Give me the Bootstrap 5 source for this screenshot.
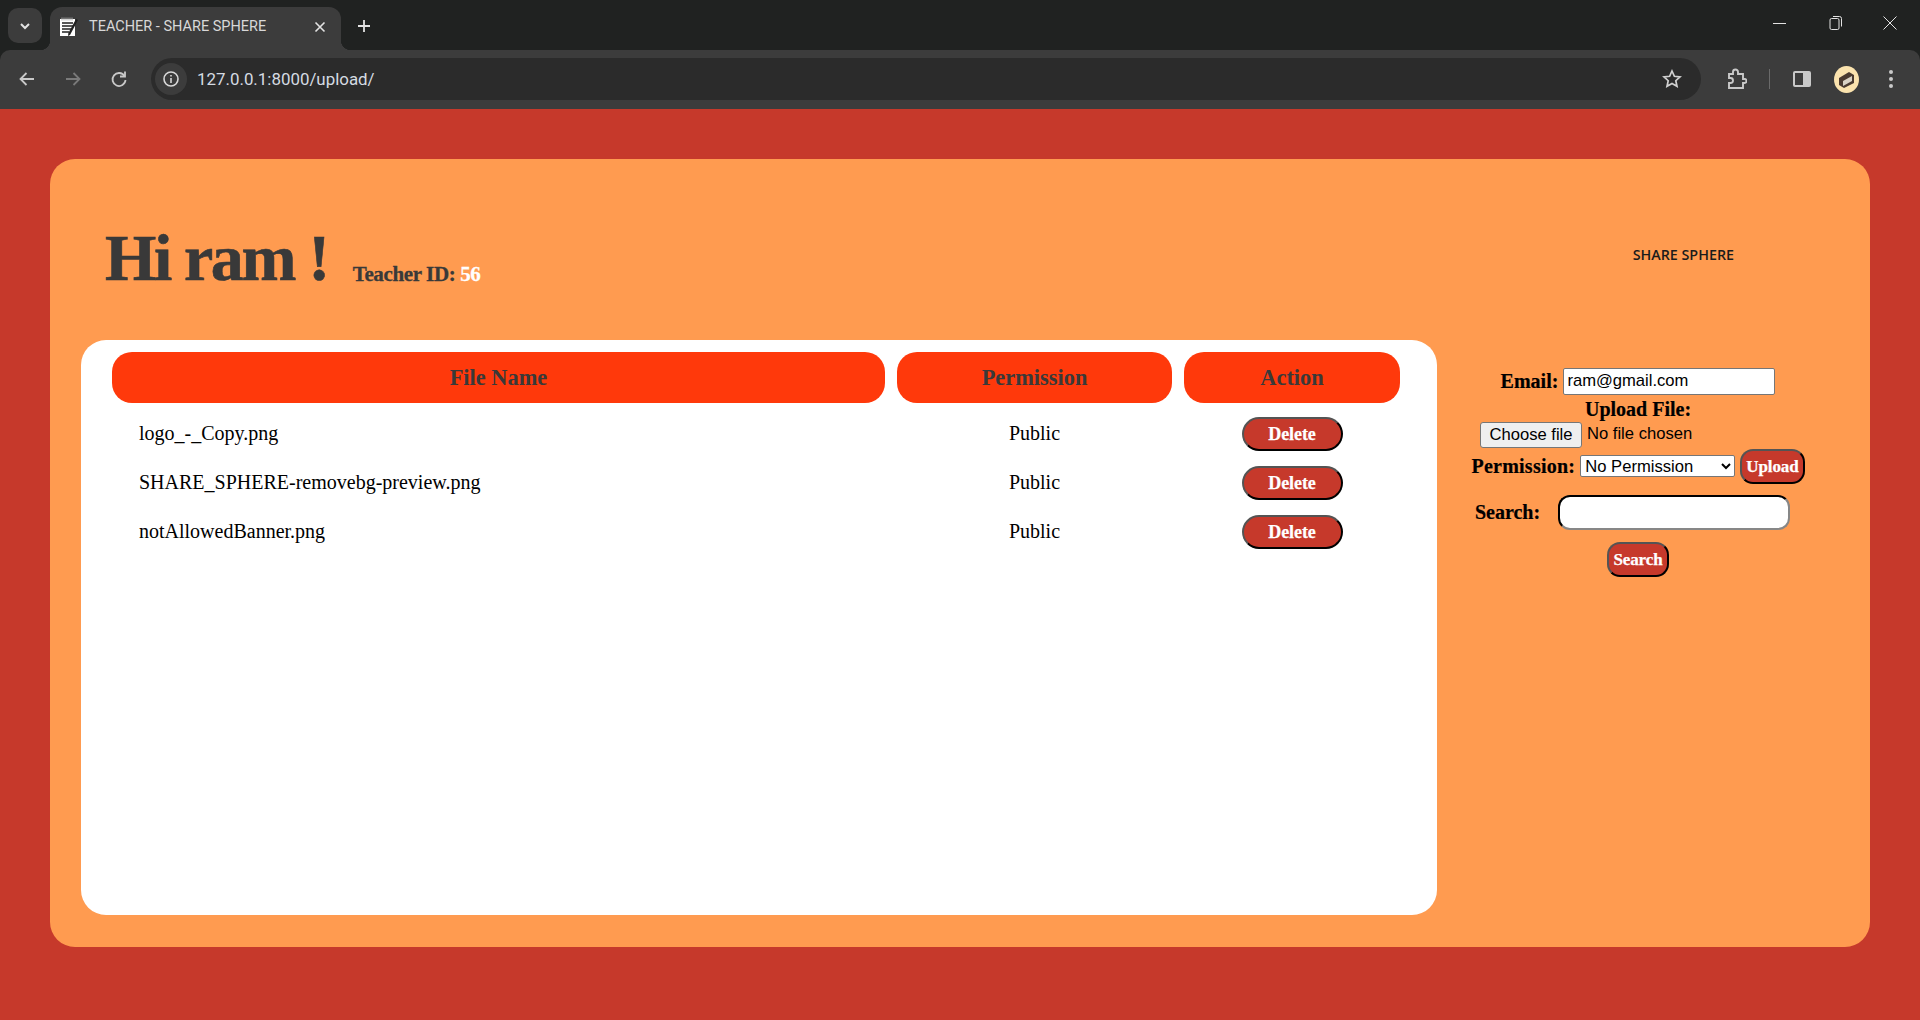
<!DOCTYPE html>
<html lang="en">
<head>
    <meta charset="UTF-8">
    <meta name="viewport" content="width=device-width, initial-scale=1.0">
    <title>TEACHER - SHARE SPHERE</title>
    <link href="https://cdn.jsdelivr.net/npm/bootstrap@5.3.3/dist/css/bootstrap.min.css" rel="stylesheet">
    <style>
        html, body { height: 100%; }
        body { background-color: #C6392B; overflow: hidden; font-family: "Liberation Serif", serif; }

        /* browser bar */
        .browser-top { background: #202221; }
        .tab-strip { height: 50px; padding: 7px 0 0 8px; }
        .tab-list-btn { width: 34px; height: 35px; margin-top: 1px; background: #3c3c3c; border-radius: 10px; }
        .tab-item { position: relative; width: 291px; height: 43px; margin-left: 8px; padding: 0 15px 4px 9px; background: #3c3c3c; border-radius: 12px 12px 0 0; color: #d8d8d8; font: 400 14.5px Roboto, sans-serif; }
        .tab-item::before, .tab-item::after { content: ""; position: absolute; bottom: 0; width: 10px; height: 10px; }
        .tab-item::before { left: -10px; background: radial-gradient(circle at 0 0, #202221 10px, #3c3c3c 10.5px); }
        .tab-item::after { right: -10px; background: radial-gradient(circle at 100% 0, #202221 10px, #3c3c3c 10.5px); }
        .tab-title { margin-left: 10px; }
        .new-tab { margin-left: 15px; margin-bottom: 6px; }
        .win-btns { gap: 35px; margin-right: 20px; margin-bottom: 11px; }
        .tool-bar { height: 58.5px; background: #3c3c3c; border-radius: 10px 10px 0 0; padding-left: 17px; padding-right: 26px; }
        .nav-gap { margin-left: 26px; }
        .omni-box { width: 1550px; height: 42px; margin-left: 22px; background: #2b2b2b; border-radius: 21px; padding: 0 19px 0 4px; color: #d5dbe2; font: 400 16.9px Roboto, sans-serif; }
        .info-dot { width: 32px; height: 32px; background: #3c3c3c; border-radius: 50%; margin-right: 10px; }
        .tool-gap { gap: 22px; }
        .sep-line { width: 1px; height: 20px; background: #6a6a6a; }
        .avatar-dot { width: 25px; height: 27px; background: #fbe3ae; border-radius: 50%; }
        .dots-icon { margin-left: 7px; }

        /* page */
        .page-wrap { padding: 50px 50px 0; }
        .main-panel { height: 788px; background: #FF9B50; border-radius: 25px; padding: 0 31px 32px; }
        .top-row { height: 181px; padding: 0 0 49px 24px; }
        .hello-text { font-size: 66px; font-weight: 700; color: #393939; letter-spacing: -2.4px; line-height: 1; margin: 0; -webkit-text-stroke: .6px #393939; }
        .id-text { font-size: 21px; font-weight: 700; color: #393939; margin-left: 25px; letter-spacing: -.38px; -webkit-text-stroke: .3px #393939; }
        .id-text span { color: #fff; -webkit-text-stroke: .3px #fff; }
        .brand-text { font: 600 14.3px "Open Sans", sans-serif; color: #1b1b1b; position: relative; top: 30px; margin-right: 105px; }

        .white-box { width: 1356px; background: #fff; border-radius: 25px; padding: 0 19px; }
        .file-table { border-collapse: separate; border-spacing: 12px; width: 1312px; table-layout: fixed; }
        .file-table th { height: 51px; padding-top: 2px; background: #FF390B; color: #393939; font-size: 22.4px; font-weight: 700; text-align: center; border-radius: 20px; }
        .file-table td { height: 37px; padding: 0; font-size: 20px; color: #000; text-align: center; }
        .file-table td.name-cell { text-align: left; padding-left: 27px; }
        .red-btn { background: #C6392B; color: #fff; font-family: "Liberation Serif", serif; font-size: 17px; font-weight: 700; letter-spacing: -.1px; height: 35px; padding: 0 4px; border: 2px outset #000; border-radius: 13px; line-height: 1; -webkit-text-stroke: .25px #fff; }
        .del-btn { width: 101px; height: 34px; margin-top: 2px; font-size: 18px; border-radius: 17px; }

        .side-form { padding-top: 28px; color: #000; }
        .side-form label { font-size: 20px; font-weight: 700; line-height: 1; -webkit-text-stroke: .2px #000; }
        .side-form .perm-label { letter-spacing: .25px; }
        .side-form input, .side-form select, .file-row { font-family: "Liberation Sans", sans-serif; font-size: 16.6px; }
        .email-input { width: 212px; height: 27px; margin-left: 5px; padding: 1px 3px; border: 1px solid #767676; border-radius: 2px; background: #fff; }
        .file-row { width: 316px; height: 26px; margin-top: 3px; }
        .choose-btn { width: 102px; height: 26px; padding: 0; margin-right: 5px; font: inherit; color: #000; background: #efefef; border: 1px solid #767676; border-radius: 3px; }
        .perm-row { margin-top: 1px; }
        .perm-select { width: 155px; height: 22px; margin: 0 5px 0 5px; border: 1px solid #767676; border-radius: 2px; background: #fff; }
        .search-row { margin-top: 11px; margin-right: 11px; }
        .search-input { width: 232px; height: 35px; margin-left: 18px; border: 2px inset #333; border-radius: 12px; background: #fff; padding: 0 8px; }
        .search-btn { margin-top: 12px; }
    </style>
</head>
<body>
    <div class="browser-top">
        <div class="tab-strip d-flex align-items-start">
            <div class="tab-list-btn d-flex align-items-center justify-content-center">
                <svg width="14" height="14" viewBox="0 0 14 14" fill="none" stroke="#e3e3e3" stroke-width="2"><path d="M3 5l4 4 4-4"/></svg>
            </div>
            <div class="tab-item d-flex align-items-center">
                <svg width="20" height="20" viewBox="0 0 20 20"><rect x="1" y="2" width="15" height="17" fill="#fff"/><path d="M3 0.5v3M5 0.5v3M7 0.5v3M9 0.5v3M11 0.5v3M13 0.5v3" stroke="#aaa"/><path d="M3 6h11M3 9h11M3 12h9M3 15h7" stroke="#222" stroke-width="1.4"/><path d="M19 3l-8 15-2 1 .4-3L17 2z" fill="#222"/></svg>
                <span class="tab-title flex-grow-1">TEACHER - SHARE SPHERE</span>
                <svg width="12" height="12" viewBox="0 0 12 12" stroke="#e3e3e3" stroke-width="1.6"><path d="M1.5 1.5l9 9M10.5 1.5l-9 9"/></svg>
            </div>
            <svg class="new-tab align-self-center" width="16" height="16" viewBox="0 0 16 16" stroke="#e3e3e3" stroke-width="1.8"><path d="M8 2v12M2 8h12"/></svg>
            <div class="win-btns d-flex align-items-center align-self-center ms-auto">
                <svg width="20" height="16" viewBox="0 0 20 16" stroke="#e3e3e3"><path d="M3 8.5h13"/></svg>
                <svg width="20" height="16" viewBox="0 0 20 16" fill="none" stroke="#e3e3e3"><rect x="5" y="3.5" width="9" height="11" rx="1.5"/><path d="M8 1.5h6.5a2 2 0 0 1 2 2v8"/></svg>
                <svg width="20" height="16" viewBox="0 0 20 16" stroke="#e3e3e3"><path d="M3.5 1.5l13 13M16.5 1.5l-13 13"/></svg>
            </div>
        </div>
        <div class="tool-bar d-flex align-items-center">
            <svg width="20" height="20" viewBox="0 0 20 20" fill="none" stroke="#c9c9c9" stroke-width="1.8"><path d="M17 10H4M9.5 4l-6 6 6 6"/></svg>
            <svg class="nav-gap" width="20" height="20" viewBox="0 0 20 20" fill="none" stroke="#7a7a7a" stroke-width="1.8"><path d="M3 10h13M10.500 4l6 6-6 6"/></svg>
            <svg class="nav-gap" width="20" height="20" viewBox="0 0 20 20" fill="none" stroke="#c9c9c9" stroke-width="1.8"><path d="M15.500 7A6.500 6.500 0 1 0 16.500 11"/><path d="M16 2.500V7.500H11" /></svg>
            <div class="omni-box d-flex align-items-center">
                <div class="info-dot d-flex align-items-center justify-content-center">
                    <svg width="18" height="18" viewBox="0 0 18 18" fill="none" stroke="#d8d8d8" stroke-width="1.6"><circle cx="9" cy="9" r="7"/><path d="M9 8v5M9 5v1.600"/></svg>
                </div>
                <span>127.0.0.1:8000/upload/</span>
                <svg class="ms-auto" width="20" height="20" viewBox="0 0 20 20" fill="none" stroke="#d0d0d0" stroke-width="1.7"><path d="M10 2l2.400 5.300 5.600.6-4.200 3.800 1.200 5.600L10 14.400l-5 2.900 1.200-5.600L2 7.900l5.600-.6z"/></svg>
            </div>
            <div class="tool-gap d-flex align-items-center ms-auto">
                <svg width="22" height="22" viewBox="0 0 22 22" fill="none" stroke="#c9c9c9" stroke-width="1.900"><path d="M4 6h4V4a2.500 2.500 0 0 1 5 0v2h5v5h1.500a2 2 0 0 1 0 4H18v5H4v-5h1.500a2.500 2.500 0 0 0 0-5H4z"/></svg>
                <span class="sep-line"></span>
                <svg width="20" height="20" viewBox="0 0 20 20"><rect x="1" y="2" width="18" height="16" rx="2" fill="#c9c9c9"/><rect x="3" y="4" width="8" height="12" fill="#3c3c3c"/></svg>
                <div class="avatar-dot d-flex align-items-center justify-content-center">
                    <svg width="19" height="19" viewBox="0 0 19 19"><path d="M2 8l10-6 5 3v8L7 18l-5-3z" fill="#4a3a30"/><path d="M6 11l9-5v5l-9 5z" fill="#d9d2c4"/></svg>
                </div>
                <svg class="dots-icon" width="6" height="20" viewBox="0 0 6 20" fill="#c9c9c9"><circle cx="3" cy="3" r="2"/><circle cx="3" cy="10" r="2"/><circle cx="3" cy="17" r="2"/></svg>
            </div>
        </div>
    </div>

    <div class="page-wrap">
        <div class="main-panel d-flex flex-column">
            <div class="top-row d-flex align-items-end">
                <h1 class="hello-text">Hi ram !</h1>
                <span class="id-text">Teacher ID: <span>56</span></span>
                <span class="brand-text ms-auto align-self-center">SHARE SPHERE</span>
            </div>
            <div class="d-flex flex-grow-1">
                <div class="white-box flex-shrink-0">
                    <table class="file-table">
                        <colgroup>
                            <col style="width:773px">
                            <col style="width:275px">
                            <col style="width:216px">
                        </colgroup>
                        <thead>
                            <tr><th>File Name</th><th>Permission</th><th>Action</th></tr>
                        </thead>
                        <tbody>
                            <tr>
                                <td class="name-cell">logo_-_Copy.png</td>
                                <td>Public</td>
                                <td><button class="red-btn del-btn">Delete</button></td>
                            </tr>
                            <tr>
                                <td class="name-cell">SHARE_SPHERE-removebg-preview.png</td>
                                <td>Public</td>
                                <td><button class="red-btn del-btn">Delete</button></td>
                            </tr>
                            <tr>
                                <td class="name-cell">notAllowedBanner.png</td>
                                <td>Public</td>
                                <td><button class="red-btn del-btn">Delete</button></td>
                            </tr>
                        </tbody>
                    </table>
                </div>
                <form class="side-form flex-grow-1 d-flex flex-column align-items-center" onsubmit="return false">
                    <div class="d-flex align-items-center">
                        <label for="emailBox">Email:</label>
                        <input id="emailBox" class="email-input" type="email" value="ram@gmail.com">
                    </div>
                    <label class="mt-1">Upload File:</label>
                    <div class="file-row d-flex align-items-center">
                        <button class="choose-btn" type="button">Choose file</button>
                        <span>No file chosen</span>
                    </div>
                    <div class="perm-row d-flex align-items-center">
                        <label class="perm-label" for="permBox">Permission:</label>
                        <select id="permBox" class="perm-select">
                            <option>No Permission</option>
                            <option>Public</option>
                        </select>
                        <button class="red-btn">Upload</button>
                    </div>
                    <div class="search-row d-flex align-items-center">
                        <label for="searchBox">Search:</label>
                        <input id="searchBox" class="search-input" type="text">
                    </div>
                    <button class="red-btn search-btn">Search</button>
                </form>
            </div>
        </div>
    </div>
    <script src="https://cdn.jsdelivr.net/npm/bootstrap@5.3.3/dist/js/bootstrap.bundle.min.js"></script>
</body>
</html>
